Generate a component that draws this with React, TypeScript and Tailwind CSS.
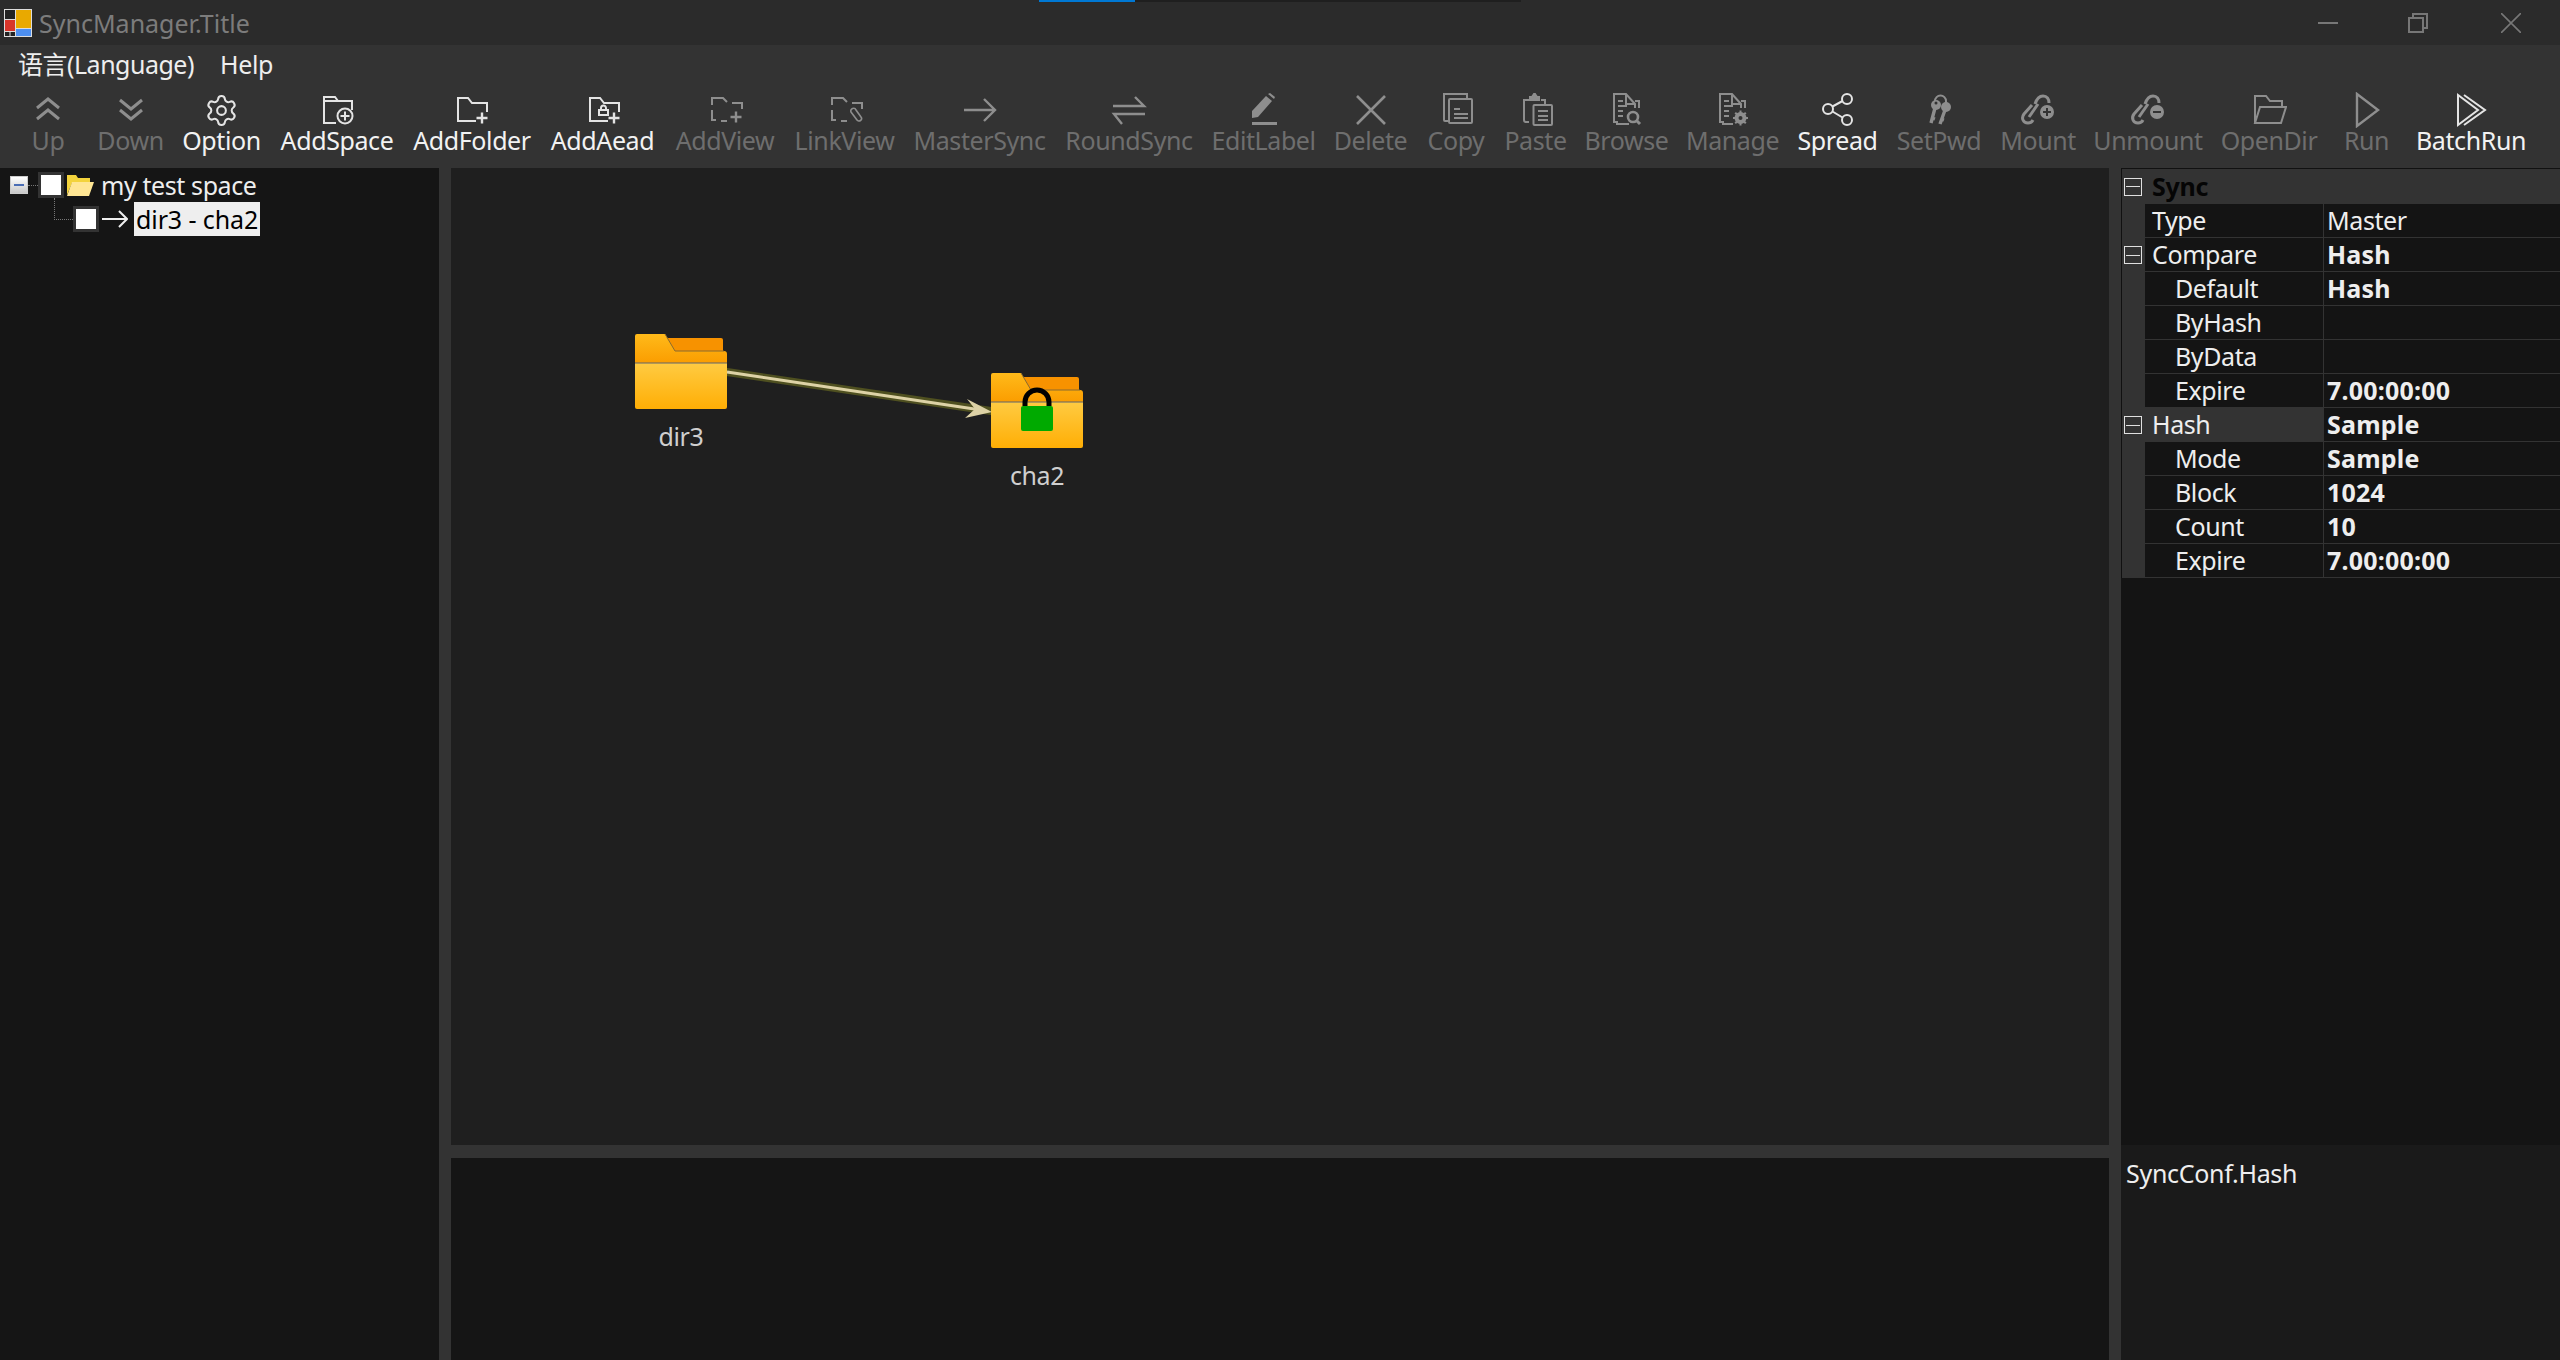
import type { ReactNode } from "react";
import { Settings } from "lucide-react";

const Ico = ({ children, sw = 2 }: { children: ReactNode; sw?: number }) => (
  <svg width="36" height="36" viewBox="0 0 36 36" fill="none" stroke="currentColor" strokeWidth={sw}>
    {children}
  </svg>
);

const Plus = ({ x, y }: { x: number; y: number }) => (
  <path d={`M${x - 5.5} ${y}h11M${x} ${y - 5.5}v11`} strokeWidth={2.4} />
);

const Link = () => (
  <>
    <path d="M15 12C17 6 20 4 23 4c4 0 6 3 6 7" />
    <path d="M12 13 4 22c-3 4-1 9 4 9 2 0 4-1 5-3" />
    <path d="M9 25l9-13" />
  </>
);

const tools = [
  { label: "Up", w: "w-[32px] mr-[14px]", on: false, icon: <Ico sw={3}><path d="M7 16 18 7l11 9M7 27l11-9 11 9" /></Ico> },
  { label: "Down", w: "w-[65px]", on: false, icon: <Ico sw={3}><path d="M7 8l11 9 11-9M7 18l11 9 11-9" /></Ico> },
  { label: "Option", w: "w-[77px]", on: true, icon: <Settings size={35} strokeWidth={1.4} /> },
  {
    label: "AddSpace", w: "w-[114px]", on: true,
    icon: (
      <Ico>
        <path d="M17 31H5V5h11l3 4h14v9M13 9h6M6 9h7" />
        <circle cx="26" cy="24" r="7.5" />
        <path d="M21.5 24h9M26 19.5v9" />
      </Ico>
    ),
  },
  {
    label: "AddFolder", w: "w-[116px]", on: true,
    icon: <Ico><path d="M22 29H4V6h10l4 5h15v9" /><Plus x={28} y={26} /></Ico>,
  },
  {
    label: "AddAead", w: "w-[105px]", on: true,
    icon: (
      <Ico>
        <path d="M23 29H5V6h10l4 5h15v9" />
        <rect x="14" y="18" width="9" height="5" />
        <path d="M16 18v-2a2.5 2.5 0 0 1 5 0v2" />
        <Plus x={29} y={26} />
      </Ico>
    ),
  },
  {
    label: "AddView", w: "w-[100px]", on: false,
    icon: <Ico><path d="M5 13V6h11l4 4M25 11h10v6M5 18v10h4M14 29h6" /><Plus x={29} y={25} /></Ico>,
  },
  {
    label: "LinkView", w: "w-[99px]", on: false,
    icon: (
      <Ico>
        <path d="M5 13V6h11l4 4M25 11h10v6M5 18v10h4M14 29h6" />
        <path d="M24 20l6 8a2.5 2.5 0 0 0 4-3l-5-7a2.5 2.5 0 0 0-5 2z" strokeWidth={1.6} />
      </Ico>
    ),
  },
  { label: "MasterSync", w: "w-[131px]", on: false, icon: <Ico sw={2.4}><path d="M2 18h30M22 7l11 11-11 11" /></Ico> },
  { label: "RoundSync", w: "w-[128px]", on: false, icon: <Ico sw={2.4}><path d="M2 14h31L24 5M34 22H3l8 10" /></Ico> },
  {
    label: "EditLabel", w: "w-[101px]", on: false,
    icon: (
      <svg width="36" height="36" viewBox="0 0 36 36" fill="currentColor">
        <path d="M6 26v-7L20 4l6 5-14 16z" />
        <path d="M22 2l2-1 5 4-1 2z" />
        <rect x="6" y="30" width="25" height="3" />
      </svg>
    ),
  },
  { label: "Delete", w: "w-[73px]", on: false, icon: <Ico sw={2.6}><path d="M4 4l28 28M32 4 4 32" /></Ico> },
  {
    label: "Copy", w: "w-[58px]", on: false,
    icon: (
      <Ico>
        <path d="M10 29H7a1 1 0 0 1-1-1V2h23v5" />
        <rect x="11" y="7" width="23" height="24" rx="1" />
        <path d="M16 17h6M16 22h14M16 26h14" />
      </Ico>
    ),
  },
  {
    label: "Paste", w: "w-[61px]", on: false,
    icon: (
      <Ico>
        <path d="M11 30H8a2 2 0 0 1-2-2V8h6M23 8h4v4" />
        <path d="M12 8V5h2l2-3h1l2 3h2v3z" fill="currentColor" />
        <rect x="15.5" y="13" width="18.5" height="20" rx="1" />
        <path d="M20 19h10M20 24h10M20 28h10" />
      </Ico>
    ),
  },
  {
    label: "Browse", w: "w-[81px]", on: false,
    icon: (
      <Ico>
        <path d="M9 30H5V2h12l9 10v4M17 2v10h9M26 9h4v7" />
        <path d="M9 9h5M9 14h9M9 19h5M9 24h5M8 30v2h12" />
        <circle cx="24" cy="25" r="5" strokeWidth={2.6} />
        <path d="M28 29l3 3" strokeWidth={3} />
      </Ico>
    ),
  },
  {
    label: "Manage", w: "w-[91px]", on: false,
    icon: (
      <Ico>
        <path d="M9 30H5V2h12l9 10v4M17 2v10h9M26 9h4v7" />
        <path d="M9 9h5M9 14h9M9 19h5M9 24h5M8 30v2h10" />
        <circle cx="25.5" cy="26" r="4" strokeWidth={4} />
        <path d="M25.5 18.5v15M18 26h15M20.2 20.7l10.6 10.6M30.8 20.7 20.2 31.3" strokeWidth={2} strokeDasharray="3 9" />
      </Ico>
    ),
  },
  {
    label: "Spread", w: "w-[79px]", on: true,
    icon: (
      <Ico>
        <circle cx="27" cy="7" r="5" />
        <circle cx="27" cy="28" r="5" />
        <circle cx="8" cy="17" r="5" />
        <path d="M12.5 14.5 22.5 9M12.5 19.5l10 6" />
      </Ico>
    ),
  },
  {
    label: "SetPwd", w: "w-[84px]", on: false,
    icon: (
      <Ico>
        <circle cx="15" cy="13" r="5" fill="currentColor" stroke="none" />
        <path d="M14 16 10 31M11 26l3 1" strokeWidth={3.4} />
        <circle cx="25" cy="15" r="5" fill="currentColor" stroke="none" />
        <path d="M24 18l-5 14M20 27l3 1" strokeWidth={3.4} />
        <path d="M14 9a5.5 5.5 0 0 1 11 0v3" />
        <circle cx="15" cy="11" r="1.5" fill="#333" stroke="none" />
      </Ico>
    ),
  },
  {
    label: "Mount", w: "w-[74px]", on: false,
    icon: (
      <Ico sw={3}>
        <Link />
        <circle cx="27" cy="20" r="7" fill="currentColor" stroke="none" />
        <path d="M23 20h8M27 16v8" stroke="#333" strokeWidth={2} />
      </Ico>
    ),
  },
  {
    label: "Unmount", w: "w-[106px]", on: false,
    icon: (
      <Ico sw={3}>
        <Link />
        <circle cx="27" cy="20" r="7" fill="currentColor" stroke="none" />
        <path d="M23 20h8" stroke="#333" strokeWidth={2} />
      </Ico>
    ),
  },
  {
    label: "OpenDir", w: "w-[96px] mr-[8px]", on: false,
    icon: <Ico><path d="M4 31V4h11l4 5h12v6M4 31h26l5-16H9z" /></Ico>,
  },
  { label: "Run", w: "w-[43px] mr-[9px]", on: false, icon: <Ico sw={2.4}><path d="M8 2v32l21-16z" /></Ico> },
  {
    label: "BatchRun", w: "w-[108px]", on: true,
    icon: <Ico sw={2}><path d="M5 3v30l20-15zM11 3l21 15-21 15" /></Ico>,
  },
];

const Minus = () => (
  <span className="flex h-[18px] w-[18px] items-center justify-center border border-[#e0e0e0]">
    <span className="h-px w-[14px] bg-[#e0e0e0]" />
  </span>
);

const rows = [
  { name: "Type", value: "Master", bold: false, sub: false, exp: false },
  { name: "Compare", value: "Hash", bold: true, sub: false, exp: true },
  { name: "Default", value: "Hash", bold: true, sub: true, exp: false },
  { name: "ByHash", value: "", bold: false, sub: true, exp: false },
  { name: "ByData", value: "", bold: false, sub: true, exp: false },
  { name: "Expire", value: "7.00:00:00", bold: true, sub: true, exp: false },
  { name: "Hash", value: "Sample", bold: true, sub: false, exp: true, hot: true },
  { name: "Mode", value: "Sample", bold: true, sub: true, exp: false },
  { name: "Block", value: "1024", bold: true, sub: true, exp: false },
  { name: "Count", value: "10", bold: true, sub: true, exp: false },
  { name: "Expire", value: "7.00:00:00", bold: true, sub: true, exp: false },
];

const Check = () => (
  <span className="block h-[26px] w-[26px] shrink-0 border-[3px] border-[#333] bg-white" />
);

const Folder = ({ locked }: { locked?: boolean }) => (
  <svg width="92" height="75" viewBox="0 0 92 75">
    <defs>
      <linearGradient id={locked ? "t2" : "t1"} x1="0" y1="0" x2="0" y2="1">
        <stop offset="0" stopColor="#ffba1a" />
        <stop offset="1" stopColor="#fb9d00" />
      </linearGradient>
      <linearGradient id={locked ? "b2" : "b1"} x1="0" y1="0" x2="0" y2="1">
        <stop offset="0" stopColor="#ffcb42" />
        <stop offset="1" stopColor="#ffae05" />
      </linearGradient>
    </defs>
    <path d="M32 4h54a2 2 0 0 1 2 2v14H32z" fill="#f79200" />
    <path d="M0 29V2a2 2 0 0 1 2-2h28l10 17h49a3 3 0 0 1 3 3v9z" fill={`url(#${locked ? "t2" : "t1"})`} />
    <path d="M30 0l10 17h49" fill="none" stroke="#8a6a30" strokeWidth="1" />
    <path d="M0 29h92v44a2 2 0 0 1-2 2H2a2 2 0 0 1-2-2z" fill={`url(#${locked ? "b2" : "b1"})`} />
    <path d="M0 29h92" stroke="#5e6470" strokeWidth="1" />
    {locked && (
      <>
        <path d="M34 33v-4a12 12 0 0 1 24 0v4" fill="none" stroke="#000" strokeWidth="5" />
        <rect x="30" y="33" width="32" height="25" rx="2" fill="#00aa00" />
      </>
    )}
  </svg>
);

export default function App() {
  return (
    <div className="flex h-[1360px] w-[2560px] flex-col overflow-hidden bg-[#333] font-['Noto_Sans','Noto_Sans_CJK_SC',sans-serif] text-[25px] leading-[34px] text-[#eee]">
      {/* title bar */}
      <div className="relative flex h-[45px] shrink-0 items-center bg-[#2b2b2b] pl-1">
        <div className="absolute left-[1039px] top-0 flex h-[2px] w-[482px] bg-[#1f1f1f]">
          <div className="h-full w-[96px] bg-[#0078d4]" />
        </div>
        <svg width="28" height="28" viewBox="0 0 28 28">
          <rect width="28" height="28" fill="#ddd" />
          <rect x="1" y="1" width="10" height="9" fill="#222" />
          <rect x="12" y="1" width="15" height="18" fill="#e9a900" />
          <rect x="1" y="11" width="10" height="11" fill="#d8352a" />
          <rect x="12" y="20" width="15" height="7" fill="#4d8ff0" />
          <rect x="1" y="23" width="4.5" height="4" fill="#222" />
          <rect x="6.5" y="23" width="4.5" height="4" fill="#222" />
        </svg>
        <span className="ml-[7px] text-[#7c7c7c]">SyncManager.Title</span>
        <div className="ml-auto flex items-center text-[#777]">
          <svg className="mr-[70px]" width="20" height="20" viewBox="0 0 20 20" stroke="currentColor" strokeWidth="2"><path d="M0 10h20" /></svg>
          <svg className="mr-[73px]" width="20" height="20" viewBox="0 0 20 20" fill="none" stroke="currentColor" strokeWidth="2"><rect x="1" y="5" width="14" height="14" /><path d="M5 5V1h14v14h-4" /></svg>
          <svg className="mr-[39px]" width="20" height="20" viewBox="0 0 20 20" stroke="currentColor" strokeWidth="1.6"><path d="M0 0l20 20M20 0 0 20" /></svg>
        </div>
      </div>

      {/* menu */}
      <div className="flex h-[37px] shrink-0 items-center gap-[26px] pl-[18px] text-[#eee]">
        <span className="tracking-[-0.5px]">语言(Language)</span>
        <span className="tracking-[-0.3px]">Help</span>
      </div>

      {/* toolbar */}
      <div className="flex h-[86px] shrink-0 gap-[20px] pl-[32px] pt-[10px]">
        {tools.map((t) => (
          <div key={t.label} className={`flex flex-col items-center ${t.w} ${t.on ? "text-[#e4e4e4]" : "text-[#8e8e8e]"}`}>
            <div className="flex h-[36px] w-[36px] items-center justify-center">{t.icon}</div>
            <span className={`-mt-[5px] whitespace-nowrap tracking-[-0.4px] ${t.on ? "text-[#f2f2f2]" : "text-[#6e6e6e]"}`}>
              {t.label}
            </span>
          </div>
        ))}
      </div>

      <div className="flex min-h-0 flex-1">
        {/* tree */}
        <div className="flex w-[439px] shrink-0 flex-col bg-[#151515] pl-[10px] pt-[4px]">
          <div className="flex h-[26px] items-center">
            <span className="relative flex h-[18px] w-[18px] items-center justify-center border border-[#ccc] bg-gradient-to-b from-white to-[#c8c8c8]">
              <span className="h-[2px] w-[10px] bg-[#4a6db5]" />
            </span>
            <span className="h-0 w-[10px] border-t border-dotted border-[#777]" />
            <Check />
            <svg className="ml-[2px]" width="29" height="24" viewBox="0 0 29 24">
              <path d="M1 22V2h9l2 3h12v5H6L1 22z" fill="#f3d33c" />
              <path d="M1 23 6 9h22l-5 14z" fill="#ffe694" />
            </svg>
            <span className="ml-[6px] tracking-[-0.4px]">my test space</span>
          </div>
          <div className="relative mt-[8px] flex h-[26px] items-center pl-[63px]">
            <span className="absolute left-[44px] top-[-8px] h-[22px] w-[19px] border-b border-l border-dotted border-[#777]" />
            <Check />
            <svg className="ml-[3px]" width="26" height="18" viewBox="0 0 26 18" fill="none" stroke="#eee" strokeWidth="2"><path d="M0 9h25M17 1l8 8-8 8" /></svg>
            <span className="ml-[6px] h-[34px] bg-[#eee] px-[2px] tracking-[-0.1px] text-black">dir3 - cha2</span>
          </div>
        </div>

        <div className="w-[12px] shrink-0" />

        {/* centre */}
        <div className="flex min-w-0 flex-1 flex-col">
          <div className="relative h-[977px] shrink-0 bg-[#1f1f1f] text-[#cfcfcf]">
            <svg className="absolute inset-0 h-full w-full">
              <path d="M276 204 540 243" stroke="#4f5020" strokeWidth="8" strokeLinecap="round" />
              <path d="M276 204 530 242" stroke="#ddd2a6" strokeWidth="3" />
              <path d="M541 244 516 231 524 241 514 250z" fill="#ddd2a6" />
            </svg>
            <div className="absolute left-[184px] top-[166px] flex w-[92px] flex-col items-center">
              <Folder />
              <span className="mt-[10px] tracking-[-0.4px]">dir3</span>
            </div>
            <div className="absolute left-[540px] top-[205px] flex w-[92px] flex-col items-center">
              <Folder locked />
              <span className="mt-[10px] tracking-[-0.4px]">cha2</span>
            </div>
          </div>
          <div className="h-[13px] shrink-0" />
          <div className="flex-1 bg-[#151515]" />
        </div>

        <div className="w-[12px] shrink-0" />

        {/* property grid */}
        <div className="flex w-[439px] shrink-0 flex-col">
          <div className="h-[977px] shrink-0 bg-[#141414]">
            <div className="border-l border-t border-[#111]">
              <div className="flex h-[35px] items-center bg-[#333] pl-[2px]">
                <Minus />
                <span className="ml-[10px] pb-[2px] font-bold tracking-[-0.3px] text-[#050505]">Sync</span>
              </div>
              {rows.map((r, i) => (
                <div key={i} className="flex h-[34px]">
                  <div className="flex w-[23px] shrink-0 items-center bg-[#333] pl-[2px]">{r.exp && <Minus />}</div>
                  <div className={`flex w-[179px] shrink-0 items-center border-b border-r border-[#333] pb-[2px] tracking-[-0.4px] ${r.sub ? "pl-[30px]" : "pl-[7px]"} ${r.hot ? "bg-[#333]" : ""}`}>
                    {r.name}
                  </div>
                  <div className={`flex flex-1 items-center border-b border-[#333] pb-[2px] pl-[3px] ${r.bold ? "font-bold tracking-[0.2px]" : "tracking-[-0.4px]"}`}>
                    {r.value}
                  </div>
                </div>
              ))}
            </div>
          </div>
          <div className="flex-1 bg-[#1a1a1a] pl-[5px] pt-[11px] tracking-[-0.3px]">SyncConf.Hash</div>
        </div>
      </div>
    </div>
  );
}
